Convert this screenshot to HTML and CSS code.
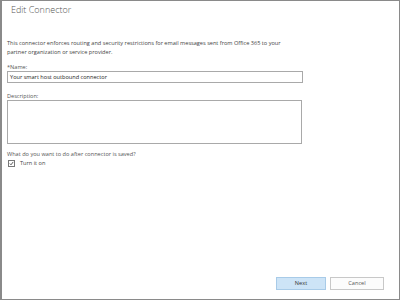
FILE: index.html
```html
<!DOCTYPE html>
<html>
<head>
<meta charset="utf-8">
<link rel="stylesheet" href="styles.css">
</head>
<body>
<div class="frame">
  <h1 class="title">Edit Connector</h1>
  <p class="intro">This connector enforces routing and security restrictions for email messages sent from Office 365 to your partner organization or service provider.</p>
  <div class="field">
    <label class="label">*Name:</label>
    <div class="input">Your smart host outbound connector</div>
  </div>
  <div class="field">
    <label class="label">Description:</label>
    <div class="textarea"></div>
  </div>
  <div class="question">What do you want to do after connector is saved?</div>
  <div class="check-row">
    <span class="checkbox"><svg width="7" height="7" viewBox="0 0 7 7"><path d="M1.2 3.6 L2.8 5.3 L5.9 1.3" fill="none" stroke="#333" stroke-width="1.1"/></svg></span>
    <span class="check-label">Turn it on</span>
  </div>
  <div class="spacer"></div>
  <div class="buttons">
    <div class="btn primary">Next</div>
    <div class="btn">Cancel</div>
  </div>
</div>
</body>
</html>
```
FILE: styles.css
```css
html, body {
  margin: 0;
  padding: 0;
  background: #fff;
}
body {
  font-family: "Open Sans", "Noto Sans", sans-serif;
  color: #444;
}
.frame {
  box-sizing: border-box;
  width: 400px;
  height: 300px;
  border: 1px solid #8a8a8a;
  border-left: 2px solid #8a8a8a;
  display: flex;
  flex-direction: column;
  padding: 0 0 0 5px;
}
.title {
  margin: 2px 0 0 4px;
  font-size: 9px;
  font-weight: 300;
  color: #555;
  line-height: 13px;
}
.intro {
  margin: 23px 0 0 0;
  width: 285px;
  font-size: 5.6px;
  line-height: 9px;
  color: #444;
}
.field {
  display: flex;
  flex-direction: column;
}
.label {
  font-size: 5.6px;
  line-height: 8px;
  color: #555;
}
.intro + .field { margin-top: 6px; }
.field + .field { margin-top: 9px; }
.input {
  box-sizing: border-box;
  width: 296px;
  height: 12px;
  border: 1px solid #a9a9a9;
  font-size: 5.6px;
  line-height: 10px;
  padding-left: 2px;
  color: #222;
}
.textarea {
  box-sizing: border-box;
  width: 295px;
  height: 44px;
  border: 1px solid #a9a9a9;
}
.question {
  margin-top: 6px;
  font-size: 5.6px;
  line-height: 8px;
  color: #555;
}
.check-row {
  display: flex;
  align-items: center;
  gap: 5px;
  margin-top: 1px;
  margin-left: 1px;
}
.checkbox {
  box-sizing: border-box;
  width: 7px;
  height: 7px;
  border: 1px solid #777;
  display: flex;
  align-items: center;
  justify-content: center;
}
.checkbox svg { display: block; }
.check-label {
  font-size: 5.6px;
  line-height: 8px;
  color: #444;
}
.spacer { flex: 1; }
.buttons {
  display: flex;
  justify-content: flex-end;
  gap: 4px;
  padding-right: 15px;
  margin-bottom: 9px;
}
.btn {
  box-sizing: border-box;
  width: 54px;
  height: 13px;
  border: 1px solid #c8c8c8;
  background: #fcfcfc;
  font-size: 5.6px;
  line-height: 11px;
  text-align: center;
  color: #555;
}
.btn.primary {
  width: 50px;
  background: #cde4f7;
  border-color: #a8cbe8;
  color: #333;
}
```
